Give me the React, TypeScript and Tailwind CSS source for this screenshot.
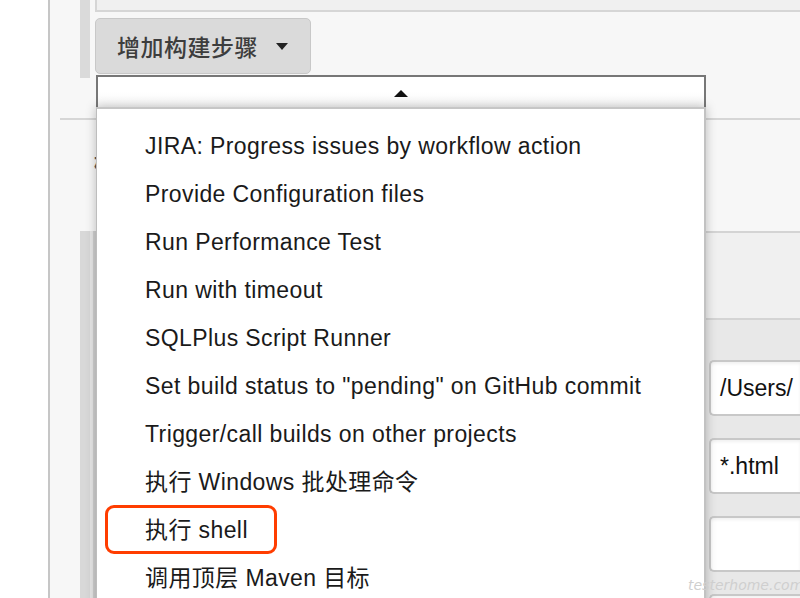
import React from "react";

const items = [
  "JIRA: Progress issues by workflow action",
  "Provide Configuration files",
  "Run Performance Test",
  "Run with timeout",
  "SQLPlus Script Runner",
  'Set build status to "pending" on GitHub commit',
  "Trigger/call builds on other projects",
  "执行 Windows 批处理命令",
  "执行 shell",
  "调用顶层 Maven 目标",
];

export default function App() {
  const font = { fontFamily: '"Liberation Sans", Arial, "Noto Sans CJK SC", sans-serif' };
  return (
    <div className="relative w-[800px] h-[598px] overflow-hidden bg-white flex" style={font}>
      {/* left white margin */}
      <div className="w-[48px] shrink-0 bg-white" />
      {/* main page area */}
      <div className="flex-1 flex flex-col border-l-2 border-[#c6c6c6] bg-[#f7f7f7]">
        {/* section 1 */}
        <div className="ml-[10px] h-[120px] shrink-0 border-b-2 border-[#d6d6d6] flex pl-[20px]">
          <div className="w-[10px] h-[78px] bg-[#dadada] shrink-0" />
          <div className="flex-1 flex flex-col pl-[5px]">
            <div className="h-[12px] bg-[#f0f0f0] border-b-2 border-l-2 border-[#d6d6d6]" />
            <div className="mt-[6px]">
              <div className="inline-flex items-center h-[56px] w-[216px] rounded-[5px] border border-[#c8c8c8] bg-[#dadada] pl-[21px] text-[#3d3d3d]">
                <span className="text-[23px] font-medium tracking-[0.5px]" style={{ fontFamily: '"Noto Sans CJK SC", sans-serif' }}>
                  增加构建步骤
                </span>
                <span className="ml-[18px] w-0 h-0 border-l-[6px] border-r-[6px] border-t-[7px] border-l-transparent border-r-transparent border-t-[#222]" />
              </div>
            </div>
          </div>
        </div>
        {/* section 2 */}
        <div className="h-[111px] shrink-0 flex">
          <div className="pl-[44px] pt-[28px] text-[20px] font-bold text-[#555]" style={{ fontFamily: '"Noto Sans CJK SC", sans-serif' }}>
            构建后操作
          </div>
        </div>
        {/* section 3 */}
        <div className="flex-1 ml-[30px] flex">
          <div className="w-[10px] bg-[#d8d8d8] shrink-0" />
          <div className="w-[3px] bg-[#e6e6e6] shrink-0" />
          <div className="w-[4px] bg-[#d0d0d0] shrink-0" />
          <div className="flex-1 flex flex-col">
            <div className="h-[87px] border-t-2 border-[#d4d4d4] bg-[#f0f0f0]" />
            <div className="flex-1 border-t-2 border-[#d4d4d4] bg-[#e8e8e8] flex flex-col pt-[40px] gap-[22px] items-end">
              {["/Users/", "*.html", "", ""].map((t, i) => (
                <div
                  key={i}
                  className="w-[91px] h-[56px] shrink-0 bg-white border-2 border-r-0 border-[#c8c8c8] rounded-l-[5px] flex items-center pl-[9px] text-[23px] text-[#111] shadow-[inset_0_2px_3px_rgba(0,0,0,0.06)] overflow-hidden whitespace-nowrap"
                >
                  {t}
                </div>
              ))}
            </div>
          </div>
        </div>
      </div>

      {/* dropdown menu overlay */}
      <div className="absolute left-[96px] top-[75px] w-[610px] flex flex-col">
        <div className="h-[32px] bg-gradient-to-b from-white via-white to-[#f6f6f6] border-2 border-b-0 border-[#777] flex items-center justify-center">
          <span className="w-0 h-0 border-l-[7px] border-r-[7px] border-b-[7px] border-l-transparent border-r-transparent border-b-[#111] mt-[2px]" />
        </div>
        <div className="h-[560px] bg-white border-t-2 border-l border-r-2 border-t-[#c6c6c6] border-l-[#bdbdbd] border-r-[#c2c2c2] shadow-[0_0_10px_rgba(0,0,0,0.25)] pt-[13px] pl-[48px] flex flex-col">
          {items.map((t, i) => (
            <div key={i} className="relative h-[48px] shrink-0 flex items-center text-[23px] tracking-[0.4px] text-[#1a1a1a] whitespace-nowrap">
              {t}
              {t === "执行 shell" && (
                <div className="absolute left-[-40px] top-[-1px] w-[172px] h-[49px] border-[3px] border-[#ff3d00] rounded-[9px]" />
              )}
            </div>
          ))}
        </div>
      </div>

      {/* watermark */}
      <div className="absolute left-[688px] top-[575px] text-[14px] italic text-[#cfcfcf]" style={{ fontFamily: '"DejaVu Sans", sans-serif' }}>
        testerhome.com
      </div>
    </div>
  );
}
